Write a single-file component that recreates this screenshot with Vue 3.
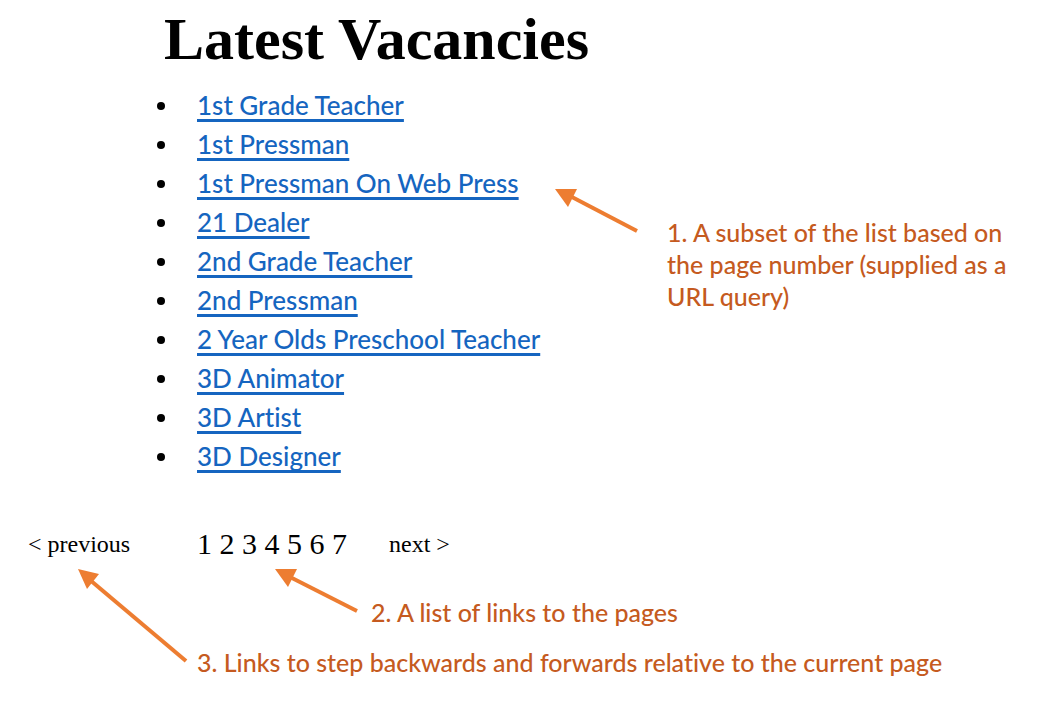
<script setup>
const vacancies = [
  '1st Grade Teacher',
  '1st Pressman',
  '1st Pressman On Web Press',
  '21 Dealer',
  '2nd Grade Teacher',
  '2nd Pressman',
  '2 Year Olds Preschool Teacher',
  '3D Animator',
  '3D Artist',
  '3D Designer',
]
const pages = [1, 2, 3, 4, 5, 6, 7]
</script>

<template>
  <main class="sheet">
    <h1>Latest Vacancies</h1>
    <div class="content">
      <ul class="vacancies">
        <li v-for="title in vacancies" :key="title"><a href="#">{{ title }}</a></li>
      </ul>
      <p class="note subset">1. A subset of the list based on the page number (supplied as a URL query)</p>
    </div>
    <nav class="pager" aria-label="Pages">
      <a class="previous" href="#">&lt; previous</a>
      <div class="pages">
        <template v-for="page in pages" :key="page"><a href="#">{{ page }}</a>{{ ' ' }}</template>
      </div>
      <a class="next" href="#">next &gt;</a>
    </nav>
    <p class="note links">2. A list of links to the pages</p>
    <p class="note steps">3. Links to step backwards and forwards relative to the current page</p>
    <svg class="arrows" width="660" height="680" viewBox="0 0 660 680" aria-hidden="true">
      <g fill="none" stroke="#ed7d31" stroke-width="4">
        <path d="M570 196 637 231" />
        <path d="M290 577 357 611" />
        <path d="M90 580 186 661" />
      </g>
      <g fill="#ed7d31">
        <path d="M555 189H577L568 207Z" />
        <path d="M275 569H297L288 587Z" />
        <path d="M78 569 99 574 87 589Z" />
      </g>
    </svg>
  </main>
</template>

<style>
body {
  margin: 0;
  background: #fff;
}
</style>

<style scoped>
.sheet {
  position: relative;
  color: #000;
  font-family: "Liberation Serif", serif;
}
h1 {
  margin: 0 0 8px 164px;
  font-size: 60px;
  line-height: 78px;
}
.content {
  display: flex;
  align-items: flex-start;
}
.vacancies {
  box-sizing: border-box;
  width: 667px;
  margin: 0;
  padding: 0 0 0 157px;
  list-style: none;
  font-family: Lato, sans-serif;
  font-size: 26px;
  font-weight: 500;
  font-variant-ligatures: none;
  line-height: 39px;
}
.vacancies li {
  display: flex;
  align-items: center;
  gap: 32px;
}
.vacancies li::before {
  content: "";
  width: 8px;
  height: 8px;
  border-radius: 50%;
  background: #000;
}
.vacancies a {
  color: #1565c0;
  text-decoration: underline;
  text-decoration-thickness: 3px;
  text-decoration-skip-ink: none;
  text-underline-offset: 4px;
}
.note {
  margin: 0;
  color: #c55a20;
  font-family: Lato, sans-serif;
  font-size: 25px;
  font-weight: 500;
  font-variant-ligatures: none;
  line-height: 32px;
}
.subset {
  flex: 1;
  padding: 130px 16px 0 0;
}
.pager {
  display: flex;
  align-items: center;
  margin-top: 48px;
  padding-left: 28px;
  font-size: 24px;
  line-height: 40px;
}
.pager a {
  color: inherit;
  text-decoration: none;
}
.previous {
  width: 169px;
}
.pages {
  width: 192px;
  font-size: 30px;
}
.links {
  margin: 32px 0 0 371px;
}
.steps {
  margin: 18px 0 0 197px;
}
.arrows {
  position: absolute;
  top: 0;
  left: 0;
  pointer-events: none;
}
</style>
